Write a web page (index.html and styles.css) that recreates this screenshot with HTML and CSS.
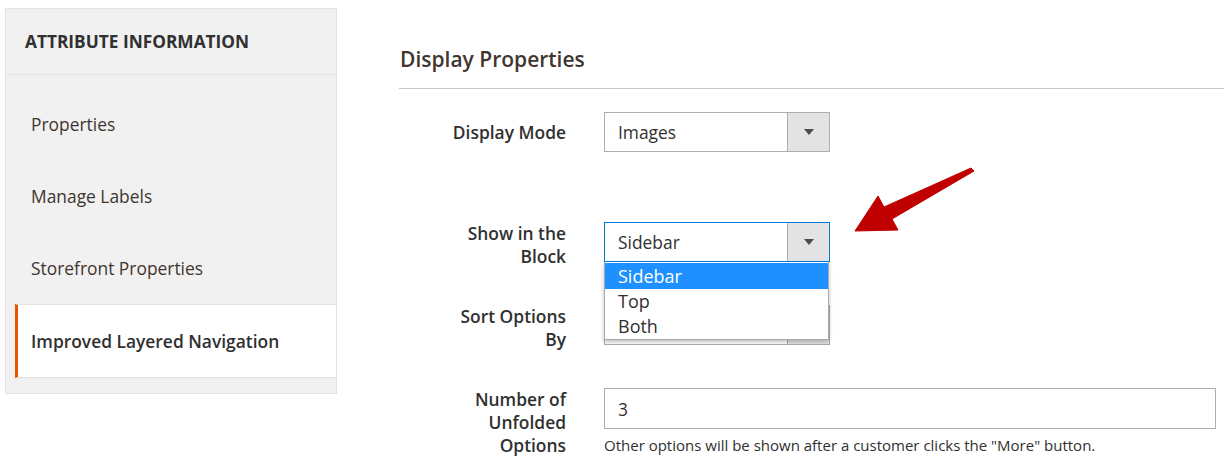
FILE: index.html
```html
<!DOCTYPE html>
<html>
<head>
<meta charset="utf-8">
<link rel="stylesheet" href="styles.css">
</head>
<body>
<div class="page">
  <aside class="sidebar">
    <div class="side-title">ATTRIBUTE INFORMATION</div>
    <ul class="side-list">
      <li class="side-item">Properties</li>
      <li class="side-item">Manage Labels</li>
      <li class="side-item">Storefront Properties</li>
      <li class="side-item active">Improved Layered Navigation</li>
    </ul>
  </aside>
  <main class="main">
    <h2 class="heading">Display Properties</h2>
    <div class="form">
      <div class="row row-mode">
        <label class="label label-single">Display Mode</label>
        <div class="control">
          <div class="select"><span class="select-value">Images</span><span class="select-btn"><span class="tri"></span></span></div>
        </div>
      </div>
      <div class="row row-block">
        <label class="label">Show in the<br>Block</label>
        <div class="control">
          <div class="select focused"><span class="select-value">Sidebar</span><span class="select-btn"><span class="tri"></span></span></div>
          <ul class="dropdown">
            <li class="opt selected">Sidebar</li>
            <li class="opt">Top</li>
            <li class="opt">Both</li>
          </ul>
        </div>
      </div>
      <div class="row row-sort">
        <label class="label">Sort Options<br>By</label>
        <div class="control">
          <div class="select"><span class="select-value"></span><span class="select-btn"><span class="tri"></span></span></div>
        </div>
      </div>
      <div class="row row-num">
        <label class="label">Number of<br>Unfolded<br>Options</label>
        <div class="control control-wide">
          <div class="input">3</div>
          <div class="note">Other options will be shown after a customer clicks the "More" button.</div>
        </div>
      </div>
    </div>
    <svg class="arrow" width="130" height="75" viewBox="0 0 130 75">
      <path d="M117 3 L120 6 L38 54 L44 65 L1 66 L24 31 L30 42 Z" fill="#c00000" stroke="#c00000" stroke-width="1" stroke-linejoin="round"/>
    </svg>
  </main>
</div>
</body>
</html>
```

FILE: styles.css
```css
* { box-sizing: border-box; }
html, body { margin: 0; padding: 0; background: #fff; }
body {
  font-family: "Open Sans", "Noto Sans", sans-serif;
  color: #303030;
  width: 1224px;
  height: 469px;
  overflow: hidden;
}
.page {
  display: flex;
  align-items: flex-start;
  padding: 8px 0 0 5px;
}
.sidebar {
  width: 332px;
  flex: none;
  background: #f1f1f1;
  border: 1px solid #e3e3e3;
  padding-bottom: 15px;
}
.side-title {
  height: 66px;
  padding: 0 0 0 19px;
  display: flex;
  align-items: center;
  font-size: 17.3px;
  font-weight: 700;
  color: #303030;
  border-bottom: 1px solid #e3e3e3;
}
.side-list {
  list-style: none;
  margin: 0;
  padding: 13px 0 0 9px;
}
.side-item {
  height: 72px;
  display: flex;
  align-items: center;
  padding-left: 16px;
  font-size: 17.4px;
  color: #41362f;
}
.side-item.active {
  background: #fff;
  border-top: 1px solid #e3e3e3;
  border-bottom: 1px solid #e3e3e3;
  border-left: 3px solid #eb5202;
  padding-left: 13px;
  height: 74px;
  font-weight: 600;
  color: #303030;
}
.main {
  position: relative;
  flex: 1;
  margin-left: 62px;
  padding-top: 36px;
}
.heading {
  margin: 0;
  font-size: 21px;
  font-weight: 600;
  color: #41362f;
  line-height: 30px;
  padding-left: 1px;
  padding-bottom: 14px;
  border-bottom: 1px solid #ccc7bd;
}
.form {
  padding-top: 23px;
}
.row {
  display: flex;
  align-items: flex-start;
}
.row-block { margin-top: 70px; }
.row-sort { margin-top: 37px; }
.row-num { margin-top: 37px; }
.label {
  width: 167px;
  flex: none;
  text-align: right;
  font-size: 17.4px;
  font-weight: 600;
  line-height: 23px;
  color: #303030;
}
.label-single { padding-top: 9px; }
.control {
  position: relative;
  margin-left: 38px;
  width: 226px;
}
.control-wide { width: 612px; }
.select {
  height: 40px;
  border: 1px solid #adadad;
  background: #fff;
  display: flex;
  align-items: stretch;
}
.select.focused { border-color: #007bdb; }
.select-value {
  flex: 1;
  display: flex;
  align-items: center;
  padding-left: 13px;
  font-size: 17.4px;
  color: #303030;
}
.select-btn {
  width: 42px;
  flex: none;
  background: #e3e3e3;
  border-left: 1px solid #adadad;
  display: flex;
  align-items: center;
  justify-content: center;
}
.tri {
  width: 0;
  height: 0;
  border-left: 5px solid transparent;
  border-right: 5px solid transparent;
  border-top: 6px solid #514943;
}
.dropdown {
  position: absolute;
  left: 0;
  top: 40px;
  width: 225px;
  margin: 0;
  padding: 1px 0 0;
  list-style: none;
  background: #fff;
  border: 1px solid #a9a9a9;
  border-top: none;
  box-shadow: 0 2px 4px rgba(0,0,0,0.25);
  z-index: 5;
}
.opt {
  height: 25px;
  line-height: 25px;
  padding-left: 13px;
  font-size: 18px;
  color: #303030;
}
.opt.selected {
  background: #1e90ff;
  color: #fff;
  height: 26px;
  line-height: 26px;
}
.input {
  height: 41px;
  border: 1px solid #adadad;
  display: flex;
  align-items: center;
  padding-left: 13px;
  font-size: 17.4px;
}
.note {
  margin-top: 6px;
  font-size: 15px;
  color: #303030;
}
.arrow {
  position: absolute;
  left: 455px;
  top: 157px;
}
```
